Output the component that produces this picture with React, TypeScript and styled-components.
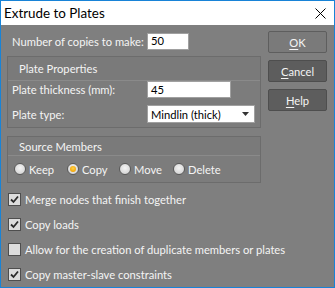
import React from "react";
import styled, { createGlobalStyle } from "styled-components";

const Global = createGlobalStyle`
  html, body { margin: 0; padding: 0; background: #ffffff; }
  body { font-family: "Lato", "Noto Sans", sans-serif; font-size: 11.2px; }
  * { box-sizing: border-box; }
`;

const Window = styled.div`
  width: 335px;
  height: 288px;
  border: 1px solid #1883d7;
  display: flex;
  flex-direction: column;
  background: #7f7f7f;
  overflow: hidden;
`;

const TitleBar = styled.div`
  height: 25px;
  background: #ffffff;
  display: flex;
  align-items: center;
  justify-content: space-between;
  padding: 0 8px 0 3px;
  color: #000;
  font-size: 13.4px;
`;

const Body = styled.div`
  flex: 1;
  display: flex;
  padding: 6px 6px 0 6px;
  gap: 7px;
`;

const LeftCol = styled.div`
  width: 254px;
  flex-shrink: 0;
  display: flex;
  flex-direction: column;
`;

const RightCol = styled.div`
  display: flex;
  flex-direction: column;
  gap: 7px;
`;

const Label = styled.span<{ $w?: number }>`
  color: #f4f4f4;
  width: ${(p) => (p.$w ? `${p.$w}px` : "auto")};
  white-space: nowrap;
  flex-shrink: 0;
`;

const Row = styled.div<{ $h?: number; $pl?: number }>`
  display: flex;
  align-items: center;
  height: ${(p) => p.$h ?? 17}px;
  padding-left: ${(p) => p.$pl ?? 5}px;
`;

const TextBox = styled.div<{ $w: number }>`
  width: ${(p) => p.$w}px;
  height: 17px;
  background: #ffffff;
  border: 1px solid #a0a0a0;
  color: #000;
  padding: 0 3px;
  display: flex;
  align-items: center;
  line-height: 1;
`;

const Select = styled.div`
  width: 108px;
  height: 18px;
  background: #ffffff;
  border: 1px solid #a0a0a0;
  color: #000;
  padding: 0 5px 0 3px;
  display: flex;
  align-items: center;
  justify-content: space-between;
`;

const Group = styled.div<{ $mt: number }>`
  margin-top: ${(p) => p.$mt}px;
  border: 1px solid #6c6c6c;
  background: #7c7c7c;
  display: flex;
  flex-direction: column;
`;

const GroupHeader = styled.div<{ $h: number }>`
  height: ${(p) => p.$h}px;
  border-bottom: 1px solid #8a8a8a;
  background: #7a7a7a;
  color: #f4f4f4;
  display: flex;
  align-items: center;
  padding-left: 11px;
`;

const GroupBody = styled.div<{ $gap: number; $pad: string }>`
  display: flex;
  flex-direction: column;
  gap: ${(p) => p.$gap}px;
  padding: ${(p) => p.$pad};
`;

const RadioRow = styled.div`
  display: flex;
  align-items: center;
  height: 26px;
  padding-left: 6px;
`;

const RadioItem = styled.div<{ $w: number }>`
  display: flex;
  align-items: center;
  gap: 3px;
  width: ${(p) => p.$w}px;
  color: #f4f4f4;
`;

const RadioCircle = styled.span<{ $on?: boolean }>`
  width: 12px;
  height: 12px;
  border-radius: 50%;
  border: 1px solid #5a5a5a;
  background: radial-gradient(circle at 50% 40%, #f4f4f4 0%, #d8d8d8 70%, #c4c4c4 100%);
  display: flex;
  align-items: center;
  justify-content: center;
  &::after {
    content: "";
    display: ${(p) => (p.$on ? "block" : "none")};
    width: 6px;
    height: 6px;
    border-radius: 50%;
    background: radial-gradient(circle at 50% 40%, #ffd24a 0%, #f0a000 80%);
  }
`;

const CheckList = styled.div`
  margin-top: 4px;
  display: flex;
  flex-direction: column;
`;

const CheckRow = styled.div`
  display: flex;
  align-items: center;
  height: 25px;
  gap: 4px;
  padding-left: 1px;
  color: #f4f4f4;
  white-space: nowrap;
`;

const CheckBox = styled.span`
  width: 13px;
  height: 13px;
  flex-shrink: 0;
  border: 1px solid #4e4e4e;
  background: #dcdcdc;
  display: flex;
  align-items: center;
  justify-content: center;
`;

const Button = styled.div<{ $default?: boolean }>`
  width: 59px;
  height: 22px;
  border: 1px solid ${(p) => (p.$default ? "#5e5e5e" : "#4e4e4e")};
  background: ${(p) => (p.$default ? "#7a7a7a" : "#5d5d5d")};
  color: #f4f4f4;
  display: flex;
  align-items: center;
  justify-content: center;
  border-radius: 2px;
  u { text-decoration: underline; text-underline-offset: 2px; }
`;

const Check = () => (
  <svg width="9" height="9" viewBox="0 0 9 9">
    <path d="M1 4.5 L3.5 7 L8 1.5" fill="none" stroke="#2a2a2a" strokeWidth="1.8" />
  </svg>
);

const CloseX = () => (
  <svg width="11" height="11" viewBox="0 0 11 11">
    <path d="M0.5 0.5 L10.5 10.5 M10.5 0.5 L0.5 10.5" stroke="#000" strokeWidth="1" />
  </svg>
);

const checks: [string, boolean][] = [
  ["Merge nodes that finish together", true],
  ["Copy loads", true],
  ["Allow for the creation of duplicate members or plates", false],
  ["Copy master-slave constraints", true],
];

const radios: [string, number, boolean][] = [
  ["Keep", 53, false],
  ["Copy", 52, true],
  ["Move", 54, false],
  ["Delete", 60, false],
];

export default function App() {
  return (
    <>
      <Global />
      <Window>
        <TitleBar>
          <span>Extrude to Plates</span>
          <CloseX />
        </TitleBar>
        <Body>
          <LeftCol>
            <Row $h={18} style={{ marginTop: 1 }}>
              <Label $w={135}>Number of copies to make:</Label>
              <TextBox $w={42}>50</TextBox>
            </Row>
            <Group $mt={6}>
              <GroupHeader $h={24}>Plate Properties</GroupHeader>
              <GroupBody $gap={7} $pad="0 5px 4px 0">
                <Row $h={17} $pl={4}>
                  <Label $w={135}>Plate thickness (mm):</Label>
                  <TextBox $w={84}>45</TextBox>
                </Row>
                <Row $h={18} $pl={4}>
                  <Label $w={135}>Plate type:</Label>
                  <Select>
                    <span>Mindlin (thick)</span>
                    <svg width="7" height="4" viewBox="0 0 7 4">
                      <path d="M0 0 H7 L3.5 4 Z" fill="#333" />
                    </svg>
                  </Select>
                </Row>
              </GroupBody>
            </Group>
            <Group $mt={8}>
              <GroupHeader $h={19}>Source Members</GroupHeader>
              <RadioRow>
                {radios.map(([t, w, on]) => (
                  <RadioItem key={t} $w={w}>
                    <RadioCircle $on={on} />
                    <span>{t}</span>
                  </RadioItem>
                ))}
              </RadioRow>
            </Group>
            <CheckList>
              {checks.map(([t, on]) => (
                <CheckRow key={t}>
                  <CheckBox>{on && <Check />}</CheckBox>
                  <span>{t}</span>
                </CheckRow>
              ))}
            </CheckList>
          </LeftCol>
          <RightCol>
            <Button $default>
              <span><u>O</u>K</span>
            </Button>
            <Button>
              <span><u>C</u>ancel</span>
            </Button>
            <Button>
              <span><u>H</u>elp</span>
            </Button>
          </RightCol>
        </Body>
      </Window>
    </>
  );
}
